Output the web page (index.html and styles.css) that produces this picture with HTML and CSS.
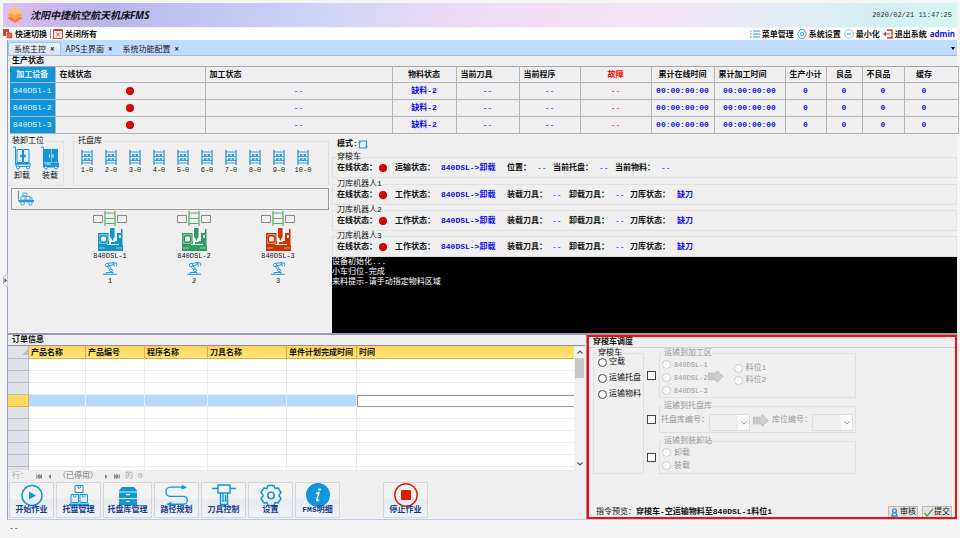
FILE: index.html
```html
<!DOCTYPE html>
<html lang="zh-CN">
<head>
<meta charset="utf-8">
<title>沈阳中捷航空航天机床FMS</title>
<link rel="stylesheet" href="styles.css">
</head>
<body>
<svg class="sprite" aria-hidden="true">
  <symbol id="rack" viewBox="0 0 12 15"><path d="M1 0v15M11 0v15" stroke="currentColor" stroke-width="1.400"/><path d="M1 2h10M1 6.500h10M1 10.500h10M1 13h10" stroke="currentColor"/><path d="M3 4h2.400v2.500H3zM6.600 4H9v2.500H6.600zM3 8.300h2.400v2H3zM6.600 8.300H9v2H6.600z" fill="currentColor"/></symbol>
  <symbol id="ladder" viewBox="0 0 12 15"><path d="M1 0v15M11 0v15M1 2h10M1 7.500h10M1 12.500h10" stroke="currentColor" stroke-width="1.200" fill="none"/></symbol>
  <symbol id="machine" viewBox="0 0 25 24"><path d="M0 5h11v12h2v-3h4v-3h2V5h5v12h-1v2H0z" fill="currentColor"/><path d="M1.500 6.500h8v9h-8z" fill="#efefef"/><rect x="1.500" y="7" width="8" height="8" rx="2" fill="currentColor"/><rect x="3" y="8.500" width="5" height="5" rx="1.500" fill="#efefef"/><path d="M10.500 4H19v9h-8.500z" fill="#efefef"/><path d="M12 0h4.500v9.500H16L14.500 13 13 9.500h-1zM23 1h1.500v22H23z" fill="currentColor"/><path d="M21 7h2v3h-2zM9 16h12v1H9z" fill="#efefef"/><path d="M0 17.500h25V23H0z" fill="currentColor"/><path d="M1 20h6M18 20h6" stroke="#efefef" stroke-width=".6"/></symbol>
  <symbol id="robot" viewBox="0 0 16 13"><path d="M1 12.300h14M4 12v-1.500h7V12M4.500 4l4 4.500M6.500 3l3.500 5M5 1.500l7-1M6 4l6-1.500M12 .8h2.500L15 3l-1 1M12 2.500l.5 2" stroke="currentColor" fill="none"/><circle cx="5" cy="3" r="1.600" stroke="currentColor" fill="#efefef"/><circle cx="9" cy="8.500" r="1.400" stroke="currentColor" fill="#efefef"/><circle cx="11.500" cy="1.600" r="1" fill="currentColor"/></symbol>
  <symbol id="arrow" viewBox="0 0 16 13"><path d="M.5 3h1.500v7H.5zM3 3h2v7H3zM6 3h3V.7L15.300 6.500 9 12.300V10H6z" fill="#cfcfcf" stroke="#b5b5b5" stroke-width=".7"/></symbol>
</svg>

<header class="banner">
  <svg class="logo" viewBox="0 0 16 16"><path d="M8 7l8 4-8 5-8-5z" fill="#ff7b45"/><path d="M8 4l8 4-8 4.500L0 8z" fill="#ffa04f"/><path d="M8 0l7 4-7 4.500L1 4z" fill="#ffc078"/></svg>
  <h1>沈阳中捷航空航天机床FMS</h1>
  <time>2020/02/21 11:47:25</time>
</header>

<nav class="toolbar">
  <a href="#"><svg viewBox="0 0 10 10"><path d="M0 0h6v3H3v4H0z" fill="#e03c28"/><path d="M4 4h5v5H4zM5 3h1v1H5z" fill="#f0604c" stroke="#d83020" stroke-width=".6"/></svg>快速切换</a>
  <a href="#" class="split"><svg viewBox="0 0 10 10"><path d="M.6.600h8.800v8.800H.6z" fill="#fff" stroke="#d9301c"/><path d="M.5 1.500h9" stroke="#d9301c"/><path d="M3 3.500l4 4M7 3.500l-4 4" stroke="#d9301c"/></svg>关闭所有</a>
  <span class="spacer"></span>
  <a href="#"><svg viewBox="0 0 10 10"><path d="M0 2h1.500M3 2h7M0 5h1.500M3 5h7M0 8h1.500M3 8h7" stroke="#2a90dc" stroke-width="1.200"/></svg>菜单管理</a>
  <a href="#"><svg viewBox="0 0 10 10"><path d="M3 .7h4L9.500 5 7 9.300H3L.5 5z" fill="none" stroke="#3aa0e0"/><circle cx="5" cy="5" r="1.800" fill="none" stroke="#3aa0e0"/></svg>系统设置</a>
  <a href="#"><svg viewBox="0 0 10 10"><circle cx="5" cy="5" r="4.300" fill="none" stroke="#86c4ec" stroke-width=".9"/><path d="M3 5h4" stroke="#3aa0e0"/></svg>最小化</a>
  <a href="#"><svg viewBox="0 0 10 10"><path d="M4 1h5v8H4" fill="none" stroke="#d9301c" stroke-width="1.300"/><path d="M0 5l3-2.500v2h4v1H3v2z" fill="#d9301c"/></svg>退出系统</a>
  <a href="#" class="user">admin</a>
</nav>

<main class="workspace">
  <button class="expander" aria-label="展开"><svg viewBox="0 0 5 15"><path d="M4.500.5L.5 4v7l4 3.500" fill="#f7f7f7" stroke="#b5b5c0"/><path d="M1.500 5v5L4 7.500z" fill="#555"/></svg></button>
  <div class="tabs">
    <button class="tab active">系统主控<b>×</b></button>
    <button class="tab">APS主界面<b>×</b></button>
    <button class="tab">系统功能配置<b>×</b></button>
    <span class="caret"></span>
  </div>

  <h2>生产状态</h2>
  <table class="status">
    <colgroup><col class="w46"><col class="w150"><col class="w187"><col class="w64"><col class="w63"><col class="w61"><col class="w71"><col class="w63"><col class="w71"><col class="w41"><col class="w36"><col class="w42"><col class="w54"></colgroup>
    <thead><tr><th>加工设备</th><th class="start">在线状态</th><th class="start">加工状态</th><th>物料状态</th><th class="start">当前刀具</th><th class="start">当前程序</th><th class="fault">故障</th><th>累计在线时间</th><th class="start">累计加工时间</th><th>生产小计</th><th>良品</th><th class="start">不良品</th><th class="near">缓存</th></tr></thead>
    <tbody>
      <tr><th>840DSl-1</th><td><i class="dot"></i></td><td class="none">--</td><td>缺料-2</td><td class="none">--</td><td class="none">--</td><td class="none fault">--</td><td>00:00:00:00</td><td>00:00:00:00</td><td>0</td><td>0</td><td>0</td><td class="near">0</td></tr>
      <tr><th>840DSl-2</th><td><i class="dot"></i></td><td class="none">--</td><td>缺料-2</td><td class="none">--</td><td class="none">--</td><td class="none fault">--</td><td>00:00:00:00</td><td>00:00:00:00</td><td>0</td><td>0</td><td>0</td><td class="near">0</td></tr>
      <tr><th>840DSl-3</th><td><i class="dot"></i></td><td class="none">--</td><td>缺料-2</td><td class="none">--</td><td class="none">--</td><td class="none fault">--</td><td>00:00:00:00</td><td>00:00:00:00</td><td>0</td><td>0</td><td>0</td><td class="near">0</td></tr>
    </tbody>
  </table>

  <section class="middle">
    <div class="plant">
      <div class="stores">
        <fieldset class="station"><legend>装卸工位</legend>
          <div class="bays">
            <figure><svg viewBox="0 0 18 23"><path d="M0 .7h2.500v17H15V16M4 3h5.500v13H4zM10.500 3H16v13h-5.500z" fill="none" stroke="currentColor"/><path d="M8 8v3M12 8v3" stroke="currentColor" stroke-width="1.500"/><path d="M3 17h14v3H3z" fill="none" stroke="currentColor"/><circle cx="5" cy="21" r="1.500" fill="#efefef" stroke="currentColor"/><circle cx="15" cy="21" r="1.500" fill="#efefef" stroke="currentColor"/></svg><figcaption>卸载</figcaption></figure>
            <figure><svg viewBox="0 0 18 23"><path d="M0 .7h2.500v17" fill="none" stroke="currentColor"/><path d="M3 2.500h7v13H3zM10.500 2.500H17v13h-6.500zM2 16h16v5H2z" fill="currentColor"/><path d="M8.500 8v3M12 8v3M4 17.500h6" stroke="#efefef" stroke-width="1.200"/><circle cx="5" cy="21" r="1.500" fill="#efefef" stroke="currentColor"/><circle cx="15" cy="21" r="1.500" fill="#efefef" stroke="currentColor"/></svg><figcaption>装载</figcaption></figure>
          </div>
        </fieldset>
        <fieldset class="pallets"><legend>托盘库</legend>
          <div class="racks">
            <figure><svg><use href="#rack"/></svg><figcaption>1-0</figcaption></figure>
            <figure><svg><use href="#rack"/></svg><figcaption>2-0</figcaption></figure>
            <figure><svg><use href="#rack"/></svg><figcaption>3-0</figcaption></figure>
            <figure><svg><use href="#rack"/></svg><figcaption>4-0</figcaption></figure>
            <figure><svg><use href="#rack"/></svg><figcaption>5-0</figcaption></figure>
            <figure><svg><use href="#rack"/></svg><figcaption>6-0</figcaption></figure>
            <figure><svg><use href="#rack"/></svg><figcaption>7-0</figcaption></figure>
            <figure><svg><use href="#rack"/></svg><figcaption>8-0</figcaption></figure>
            <figure><svg><use href="#rack"/></svg><figcaption>9-0</figcaption></figure>
            <figure><svg><use href="#rack"/></svg><figcaption>10-0</figcaption></figure>
          </div>
        </fieldset>
      </div>
      <div class="track"><svg viewBox="0 0 17 15"><path d="M.5 0v8.500" stroke="currentColor"/><path d="M0 9h16v2.200H1z" fill="currentColor"/><path d="M5 2h4v3H5zM3 5.500h4V9H3zM8 5.500h4V9H8z" fill="none" stroke="currentColor" stroke-width=".8"/><path d="M12 6l2 1v2" fill="none" stroke="currentColor" stroke-width=".7"/><circle cx="4.500" cy="12.500" r="1.700" fill="#efefef" stroke="currentColor" stroke-width=".9"/><circle cx="12.500" cy="12.500" r="1.700" fill="#efefef" stroke="currentColor" stroke-width=".9"/></svg></div>
      <div class="machines">
        <div class="cell idle"><div class="feed"><i></i><svg><use href="#ladder"/></svg><i></i></div><svg class="machine"><use href="#machine"/></svg><span>840DSL-1</span><svg class="robot"><use href="#robot"/></svg><span>1</span></div>
        <div class="cell running"><div class="feed"><i></i><svg><use href="#ladder"/></svg><i></i></div><svg class="machine"><use href="#machine"/></svg><span>840DSL-2</span><svg class="robot"><use href="#robot"/></svg><span>2</span></div>
        <div class="cell alarm"><div class="feed"><i></i><svg><use href="#ladder"/></svg><i></i></div><svg class="machine"><use href="#machine"/></svg><span>840DSL-3</span><svg class="robot"><use href="#robot"/></svg><span>3</span></div>
      </div>
    </div>

    <div class="monitor">
      <div class="mode">模式:<svg viewBox="0 0 10 9"><path d="M1.500 1h7v7h-7z" fill="none" stroke="#2a9fe0" stroke-width="1.200"/><path d="M0 3l1.500-2.500L3 3zM7 6l1.500 2.500L10 6z" fill="#2a9fe0"/></svg></div>
      <fieldset class="unit"><legend>穿梭车</legend>
        <div class="readout shuttle"><span>在线状态：</span><i class="dot"></i><span>运输状态：</span><em>840DSL-&gt;卸载</em><span>位置：</span><em class="none">--</em><span>当前托盘：</span><em class="none">--</em><span>当前物料：</span><em class="none">--</em></div>
      </fieldset>
      <fieldset class="unit"><legend>刀库机器人1</legend>
        <div class="readout"><span>在线状态：</span><i class="dot"></i><span>工作状态：</span><em>840DSL-&gt;卸载</em><span>装载刀具：</span><em class="none">--</em><span>卸载刀具：</span><em class="none">--</em><span>刀库状态：</span><em>缺刀</em></div>
      </fieldset>
      <fieldset class="unit"><legend>刀库机器人2</legend>
        <div class="readout"><span>在线状态：</span><i class="dot"></i><span>工作状态：</span><em>840DSL-&gt;卸载</em><span>装载刀具：</span><em class="none">--</em><span>卸载刀具：</span><em class="none">--</em><span>刀库状态：</span><em>缺刀</em></div>
      </fieldset>
      <fieldset class="unit"><legend>刀库机器人3</legend>
        <div class="readout"><span>在线状态：</span><i class="dot"></i><span>工作状态：</span><em>840DSL-&gt;卸载</em><span>装载刀具：</span><em class="none">--</em><span>卸载刀具：</span><em class="none">--</em><span>刀库状态：</span><em>缺刀</em></div>
      </fieldset>
      <div class="console"><p>设备初始化...</p><p>小车归位-完成</p><p>来料提示-请手动指定物料区域</p></div>
    </div>
  </section>

  <section class="bottom">
    <div class="orders">
      <h2>订单信息</h2>
      <div class="grid">
        <div class="rows">
          <table>
            <colgroup><col class="w21"><col class="w57"><col class="w59"><col class="w63"><col class="w79"><col class="w70"><col class="w218"></colgroup>
            <thead><tr><th class="corner"><i></i></th><th>产品名称</th><th>产品编号</th><th>程序名称</th><th>刀具名称</th><th>单件计划完成时间</th><th>时间</th></tr></thead>
            <tbody>
              <tr><th></th><td></td><td></td><td></td><td></td><td></td><td></td></tr>
              <tr><th></th><td></td><td></td><td></td><td></td><td></td><td></td></tr>
              <tr><th></th><td></td><td></td><td></td><td></td><td></td><td></td></tr>
              <tr class="selected"><th></th><td></td><td></td><td></td><td></td><td></td><td class="focus"></td></tr>
              <tr><th></th><td></td><td></td><td></td><td></td><td></td><td></td></tr>
              <tr><th></th><td></td><td></td><td></td><td></td><td></td><td></td></tr>
              <tr><th></th><td></td><td></td><td></td><td></td><td></td><td></td></tr>
              <tr><th></th><td></td><td></td><td></td><td></td><td></td><td></td></tr>
              <tr><th></th><td></td><td></td><td></td><td></td><td></td><td></td></tr>
              <tr><th></th><td></td><td></td><td></td><td></td><td></td><td></td></tr>
            </tbody>
          </table>
        </div>
        <div class="scroll">
          <svg viewBox="0 0 6 4"><path d="M.5 3.500L3 1l2.500 2.500" fill="none" stroke="#555" stroke-width="1.200"/></svg>
          <i></i>
          <svg viewBox="0 0 6 4"><path d="M.5.500L3 3 5.500.500" fill="none" stroke="#555" stroke-width="1.200"/></svg>
        </div>
      </div>
      <div class="pager">
        <span class="word">行：</span>
        <svg viewBox="0 0 6 5"><path d="M.5 0v5M3.500 0v5L1 2.500zM6 0v5L3.500 2.500z" fill="#888" stroke="#888" stroke-width=".6"/></svg>
        <svg viewBox="0 0 6 5"><path d="M4 0v5L1.500 2.500z" fill="#888"/></svg>
        <span>（已停用）</span>
        <svg viewBox="0 0 6 5"><path d="M2 0v5l2.500-2.500z" fill="#888"/></svg>
        <svg viewBox="0 0 6 5"><path d="M5.500 0v5M2.500 0v5L5 2.500zM0 0v5l2.500-2.500z" fill="#888" stroke="#888" stroke-width=".6"/></svg>
        <span class="faint">的 0</span>
      </div>
      <div class="actions">
        <button><svg viewBox="0 0 24 24"><circle cx="12" cy="12.500" r="10" fill="none" stroke="currentColor" stroke-width="1.500"/><path d="M9 8.500v8l7-4z" fill="currentColor"/></svg>开始作业</button>
        <button><svg viewBox="0 0 24 24"><path d="M8 2.500h8v7H8zM4 11.500h7.500v8H4zM13 11.500h7.500v8H13z" fill="none" stroke="currentColor"/><path d="M11 2.500v2.500h2.500V2.500M6.500 11.500V14H9v-2.500M15.500 11.500V14H18v-2.500" fill="none" stroke="currentColor" stroke-width=".8"/><path d="M2 20.500h20v1.500H2zM3 22h3v1.500H3zM10.500 22h3v1.500h-3zM18 22h3v1.500h-3z" fill="currentColor"/></svg>托盘管理</button>
        <button class="wide"><svg viewBox="0 0 24 24"><path d="M6 4h12l3 3.500v1H3v-1zM3 9.500h18V15H3zM3 16h18v6H3z" fill="currentColor"/><path d="M10 11.700h4M10 18.300h4" stroke="#eef1f5" stroke-width="1.300"/></svg>托盘库管理</button>
        <button><svg viewBox="0 0 26 24"><path d="M19 3.500H6a5 5 0 0 0 0 10h14a4 4 0 0 1 0 8.500H6" fill="none" stroke="currentColor" stroke-width="1.500"/><path d="M18 .8l6 2.700-6 2.700zM7 19.300L1 22l6 2z" fill="currentColor"/></svg>路径规划</button>
        <button><svg viewBox="0 0 24 24"><path d="M6 2h12v8H6zM0 5.500h6M18 5.500h6M8.500 10h7v11.500h-7zM11 10v9M13.500 12v7M10 22l2 1.500 2-1.500" fill="none" stroke="currentColor" stroke-width="1.400"/></svg>刀具控制</button>
        <button><svg viewBox="0 0 24 24"><path d="M9 2.500h6l1 3 3-.5 3 4.500-2 2.500v1l2 2.500-3 4.500-3-.5-1 3H9l-1-3-3 .5-3-4.500L4 13v-1L2 9.500 5 5l3 .5z" fill="none" stroke="currentColor" stroke-width="1.500" stroke-linejoin="round"/><circle cx="12" cy="12.500" r="3.200" fill="none" stroke="currentColor" stroke-width="1.500"/></svg>设置</button>
        <button><svg viewBox="0 0 24 24"><circle cx="12" cy="12" r="12" fill="currentColor"/><circle cx="13.600" cy="6.500" r="1.300" fill="#fff"/><path d="M10 10.500l3-.8-2.300 7c-.4 1.500.8 1.300 2.300-.2" fill="none" stroke="#fff" stroke-width="1.400"/></svg>FMS明细</button>
        <button class="stop"><svg viewBox="0 0 24 24"><circle cx="12" cy="12" r="11.200" fill="none" stroke="currentColor" stroke-width="1.500"/><rect x="7" y="7" width="10" height="10" rx="1" fill="currentColor"/></svg>停止作业</button>
      </div>
    </div>

    <form class="dispatch">
      <h2>穿梭车调度</h2>
      <div class="targets">
        <fieldset class="cart"><legend>穿梭车</legend>
          <div class="column">
            <label><input type="radio" name="cart">空载</label>
            <label><input type="radio" name="cart">运输托盘</label>
            <label><input type="radio" name="cart">运输物料</label>
          </div>
        </fieldset>
        <input type="checkbox" aria-label="运输到加工区">
        <fieldset disabled><legend>运输到加工区</legend>
          <div class="area">
            <div class="column">
              <label><input type="radio" name="machine"><span>840DSL-1</span></label>
              <label><input type="radio" name="machine"><span>840DSL-2</span></label>
              <label><input type="radio" name="machine"><span>840DSL-3</span></label>
            </div>
            <svg><use href="#arrow"/></svg>
            <div class="column slots">
              <label><input type="radio" name="slot">料位1</label>
              <label><input type="radio" name="slot">料位2</label>
            </div>
          </div>
        </fieldset>
        <input type="checkbox" aria-label="运输到托盘库">
        <fieldset disabled><legend>运输到托盘库</legend>
          <div class="library">
            <label for="lib">托盘库编号：</label>
            <div class="pick"><select id="lib"><option></option></select><svg viewBox="0 0 6 4"><path d="M.5.500L3 3 5.500.500" fill="none" stroke="#999"/></svg></div>
            <svg class="to"><use href="#arrow"/></svg>
            <label for="pos">库位编号：</label>
            <div class="pick"><select id="pos"><option></option></select><svg viewBox="0 0 6 4"><path d="M.5.500L3 3 5.500.500" fill="none" stroke="#999"/></svg></div>
          </div>
        </fieldset>
        <input type="checkbox" aria-label="运输到装卸站">
        <fieldset disabled><legend>运输到装卸站</legend>
          <div class="column">
            <label><input type="radio" name="dock">卸载</label>
            <label><input type="radio" name="dock">装载</label>
          </div>
        </fieldset>
      </div>
      <footer>
        <span>指令预览：</span><strong>穿梭车-空运输物料至840DSL-1料位1</strong>
        <button type="button"><svg viewBox="0 0 8 9"><circle cx="4" cy="2.700" r="1.900" fill="none" stroke="#1b96dc" stroke-width="1.300"/><path d="M2.800 4.500L1.300 8h5.400L5.200 4.500" fill="none" stroke="#1b96dc" stroke-width="1.300"/></svg>审核</button>
        <button type="button"><svg viewBox="0 0 9 9"><path d="M.5 5L3 8l6-7" fill="none" stroke="#3aa655" stroke-width="1.200"/></svg>提交</button>
      </footer>
    </form>
  </section>
</main>
<div class="statusbar">--</div>
</body>
</html>
```

FILE: styles.css
```css
* { box-sizing: border-box; }

body {
  display: flex;
  flex-direction: column;
  min-height: 100vh;
  margin: 0;
  padding: 3px 3px 0;
  background: #f5f5f5;
  color: #111;
  font: 8px/10px "Liberation Mono", "Noto Sans CJK SC", monospace;
  overflow-x: hidden;
}

h1, h2, p, figure, fieldset, legend { margin: 0; padding: 0; }
.sprite { position: absolute; width: 0; height: 0; }
svg { display: block; flex: none; }
button { font: inherit; padding: 0; margin: 0; }
fieldset { min-width: 0; border: 1px solid #e0e0e0; }
legend { margin-left: 3px; padding: 0 1px; }
h2 { padding-left: 4px; font-size: 8px; line-height: 10px; font-weight: bold; }

/* Banner and toolbar */
.banner {
  display: flex;
  align-items: center;
  height: 24px;
  padding: 0 5px 0 4px;
  background: linear-gradient(100deg, #dcc4ec 0%, #c9b8ec 5%, #b9b4ec 11%, #c2c4f2 20%, #cdd3f7 32%, #dcd8f6 40%, #ecdbf5 48%, #f2dff4 58%, #f2e6f7 70%, #e6ecf7 80%, #d3eff4 91%, #d6f6f2 100%);
}
.logo { width: 16px; height: 16px; }
h1 { flex: 1; margin-left: 7px; font: italic bold 10px/16px "Noto Sans", "Noto Sans CJK SC", sans-serif; }
time { font-size: 7px; color: #333; }

.toolbar {
  display: flex;
  align-items: center;
  gap: 3px;
  height: 12px;
  margin-top: 1px;
  background: #fff;
  font-family: "Noto Sans", "Noto Sans CJK SC", sans-serif;
  font-weight: bold;
}
.toolbar a { display: flex; align-items: center; gap: 2px; color: #111; text-decoration: none; }
.toolbar svg { width: 10px; height: 10px; }
.toolbar .split { padding-left: 2px; border-left: 1px solid #999; }
.toolbar .user { margin-right: 2px; color: #1414e6; }
.spacer { flex: 1; }

/* Workspace */
.workspace { position: relative; display: flex; flex: 1; flex-direction: column; margin-left: 4px; border-left: 1px solid #8e9fc4; border-bottom: 1px solid #bccbe6; background: #efefef; }
.expander { position: absolute; top: 50%; left: -5px; margin-top: -7px; border: 0; background: none; }
.expander svg { width: 5px; height: 15px; }

.tabs { display: flex; align-items: stretch; height: 16px; padding-top: 2px; background: #bfdbff; border-bottom: 1px solid #a3b8d8; }
.tab {
  display: flex;
  align-items: center;
  gap: 4px;
  padding: 0 5px;
  border: 0;
  background: none;
  color: #222;
  font-family: "Noto Sans", "Noto Sans CJK SC", sans-serif;
}
.tab.active { background: linear-gradient(#eef4fd, #d3e3fa); border: 1px solid #a9c0e4; border-bottom: 0; border-radius: 3px 3px 0 0; }
.caret { align-self: center; margin: 0 2px 0 auto; border: 2px solid transparent; border-top: 3px solid #000; border-bottom: 0; }

.status { width: 100%; table-layout: fixed; border-collapse: collapse; border-top: 1px solid #9a9aac; font-weight: bold; }
.status th, .status td { height: 17px; padding: 0; border: 1px solid #b4b4b4; border-top-color: #a6a6ae; text-align: center; white-space: nowrap; }
.status thead th { height: 16px; }
.status td { color: #1010e8; }
.status tr > :first-child { background: #1296db; background-clip: padding-box; border-left: 2px solid #efefef; color: #e8f6ff; }
.status tbody th { color: #6cf58a; font-weight: normal; }
.status .start { padding-left: 4px; text-align: left; }
.status .near { padding-right: 14px; }
.status .fault { color: #f01010; }
.none { font-weight: normal; }
.dot { display: inline-block; width: 8px; height: 8px; border-radius: 50%; background: radial-gradient(circle at 40% 40%, #e80808, #b80000); vertical-align: middle; }

.w21 { width: 21px; } .w36 { width: 36px; } .w41 { width: 41px; } .w42 { width: 42px; } .w46 { width: 46px; }
.w54 { width: 54px; } .w57 { width: 57px; } .w59 { width: 59px; } .w61 { width: 61px; } .w63 { width: 63px; }
.w64 { width: 64px; } .w70 { width: 70px; } .w71 { width: 71px; } .w79 { width: 79px; } .w150 { width: 150px; }
.w187 { width: 187px; } .w218 { width: 218px; }

/* Plant overview and unit monitor */
.middle { display: grid; flex: 1; grid-template-columns: 324px 1fr; border-bottom: 2px solid #9a9aac; }
.plant { padding-top: 2px; font-size: 7px; }
.plant legend { font-size: 8px; }
.stores { display: flex; gap: 9px; padding-right: 3px; }
.station { width: 56px; height: 50px; border-left: 0; }
.pallets { flex: 1; }
figure { display: flex; flex-direction: column; align-items: center; }
.bays { display: flex; gap: 10px; padding-left: 5px; color: #1296db; font-size: 8px; }
.bays svg { width: 18px; height: 24px; }
.bays figcaption { color: #111; margin-top: 1px; }
.racks { display: grid; grid-template-columns: repeat(10, 24px); padding: 4px 0 0 1px; color: #3a9edb; }
.racks svg { width: 12px; height: 15px; }
.racks figcaption { color: #222; }
.track { height: 22px; margin: 2px 3px 1px 3px; padding: 2px 6px; border: 1px solid #9a9a9a; color: #2a98dc; }
.track svg { width: 17px; height: 15px; }
.machines { display: grid; grid-template-columns: repeat(3, 84px); padding-left: 60px; }
.cell { display: flex; flex-direction: column; align-items: center; line-height: 8px; }
.feed { display: flex; align-items: center; gap: 1px; color: #52b26c; }
.feed i { width: 10px; height: 8px; border: 1px solid #8a8a8a; }
.feed svg { width: 12px; height: 15px; }
.machine { width: 25px; height: 24px; margin-top: 2px; }
.robot { width: 16px; height: 13px; margin: 2px 0; color: #2a98dc; }
.idle .machine { color: #0f94cc; }
.running .machine { color: #2f9c66; }
.alarm .machine { color: #cc3300; }

.monitor { display: flex; flex-direction: column; font-weight: bold; }
.mode { display: flex; align-items: center; height: 18px; padding: 2px 0 0 5px; }
.mode svg { width: 10px; height: 9px; }
.unit { height: 26px; }
.unit legend { font-weight: normal; }
.unit:nth-of-type(1) { margin-bottom: 1px; }
.readout { display: grid; grid-template-columns: 42px 16px 46px 66px 45px 17px 46px 15px 47px 30px; align-items: center; padding: 1px 0 0 4px; white-space: nowrap; }
.readout.shuttle { grid-template-columns: 42px 16px 46px 66px 30px 16px 46px 16px 46px 30px; }
.readout em { color: #1010e8; font-style: normal; }
.console { flex: 1; background: #000; color: #fff; font-weight: normal; }

/* Orders */
.bottom { display: grid; grid-template-columns: 1fr 370px; }
.orders { border-right: 1px solid #8e8ea6; }
.grid { display: grid; grid-template-columns: 1fr 11px; height: 125px; border-top: 1px solid #8e8ea6; margin-right: 1px; }
.rows { overflow: hidden; background: #fff; }
.rows table { width: 100%; table-layout: fixed; border-collapse: separate; border-spacing: 0; }
.rows th, .rows td { height: 12px; padding: 0; border-right: 1px solid #ececec; border-bottom: 1px solid #ececec; line-height: 9px; text-align: left; white-space: nowrap; }
.rows thead th { height: 13px; padding-left: 2px; background: linear-gradient(#ffd35a, #ffe878); border-color: #d8ae4c; }
.rows tr > th:first-child { background: #dfe2e8; border-color: #b8bcc4; }
.rows .corner i { display: block; width: 0; margin-left: 12px; border: 3px solid transparent; border-right-color: #bbb; border-bottom-color: #bbb; }
.rows .selected td { background: #b5d9ff; }
.rows tr.selected > th:first-child { background: #ffd85e; border-color: #e0b040; }
.rows .selected .focus { background: #fff; border: 1px solid #999; }
.scroll { display: flex; flex-direction: column; align-items: center; padding: 4px 0; background: #f0f0f0; }
.scroll i { width: 9px; height: 20px; margin: 4px 0 auto; background: #c8c8c8; }
.scroll svg { width: 6px; height: 4px; }
.pager { display: flex; align-items: center; gap: 5px; height: 12px; padding-left: 4px; color: #777; }
.pager svg { width: 6px; height: 5px; }
.pager .word { margin-right: 3px; color: #aaa; }
.faint { color: #aaa; }

.actions { display: flex; gap: 2px; padding: 0 0 1px 1px; }
.actions button {
  display: flex;
  flex-direction: column;
  align-items: center;
  width: 45px;
  height: 36px;
  border: 1px solid #d4d6da;
  border-radius: 1px;
  background: linear-gradient(#f2f2f3 0 45%, #e6eaf1 50%, #f2f3f5);
  color: #1296db;
  font-weight: bold;
  -webkit-text-fill-color: #153c88;
}
.actions svg { width: 24px; height: 24px; margin-bottom: -2px; }
.actions .wide { width: 49px; }
.actions .stop { margin-left: 41px; color: #dc2008; }

/* Shuttle dispatch */
.dispatch { display: flex; flex-direction: column; border: 2px solid #fa0a0a; }
.dispatch h2 { height: 11px; border-bottom: 1px solid #d4d4dc; }
.targets { display: grid; grid-template-columns: 51px 9px 197px; grid-template-rows: 50px 32px 38px; gap: 3px 3px; padding-left: 4px; align-items: center; }
.targets fieldset { align-self: stretch; }
.cart { grid-row: span 3; }
.targets fieldset:disabled { color: #9a9a9a; }
.column { display: grid; grid-auto-rows: 13px; padding-left: 2px; }
.cart .column { grid-auto-rows: 16px; margin-top: -4px; padding-left: 4px; }
.column label { display: flex; align-items: center; gap: 3px; white-space: nowrap; }
.cart label { gap: 2px; }
.column span { font-size: 7px; }
input { appearance: none; flex: none; width: 9px; height: 9px; margin: 0; border: 1px solid #444; background: #fff; }
input[type="radio"] { border-radius: 50%; }
input[type="checkbox"] { margin-top: 4px; }
input:disabled { border-color: #ccc; }
.area { display: flex; }
.area svg { width: 16px; height: 13px; margin: 12px 10px 0 0; }
.area .slots { padding-top: 4px; padding-left: 0; grid-auto-rows: 12px; }
.library { display: flex; align-items: center; padding-left: 1px; height: 18px; white-space: nowrap; }
.library .to { width: 16px; height: 13px; margin: 0 3px; }
.pick { display: grid; flex: none; width: 41px; height: 12px; align-items: center; }
.pick > * { grid-area: 1 / 1; }
.pick select { appearance: none; width: 100%; height: 100%; border: 1px solid #d8d8d8; background: linear-gradient(90deg, #efefef 72%, #fff 72%); }
.pick svg { z-index: 1; width: 6px; height: 4px; justify-self: end; margin-right: 3px; }
.dispatch footer { display: flex; align-items: center; gap: 4px; margin-top: auto; padding: 0 3px 0 7px; }
.dispatch footer span { margin-right: -4px; }
.dispatch footer strong { flex: 1; }
.dispatch footer button { display: flex; align-items: center; justify-content: center; gap: 1px; width: 30px; height: 11px; border: 1px solid #bbb; border-bottom: 0; background: #e2e2e2; color: #111; }
.dispatch footer button svg { width: 9px; height: 9px; }

.statusbar { height: 18px; padding: 3px 6px; color: #2020b0; }
```
